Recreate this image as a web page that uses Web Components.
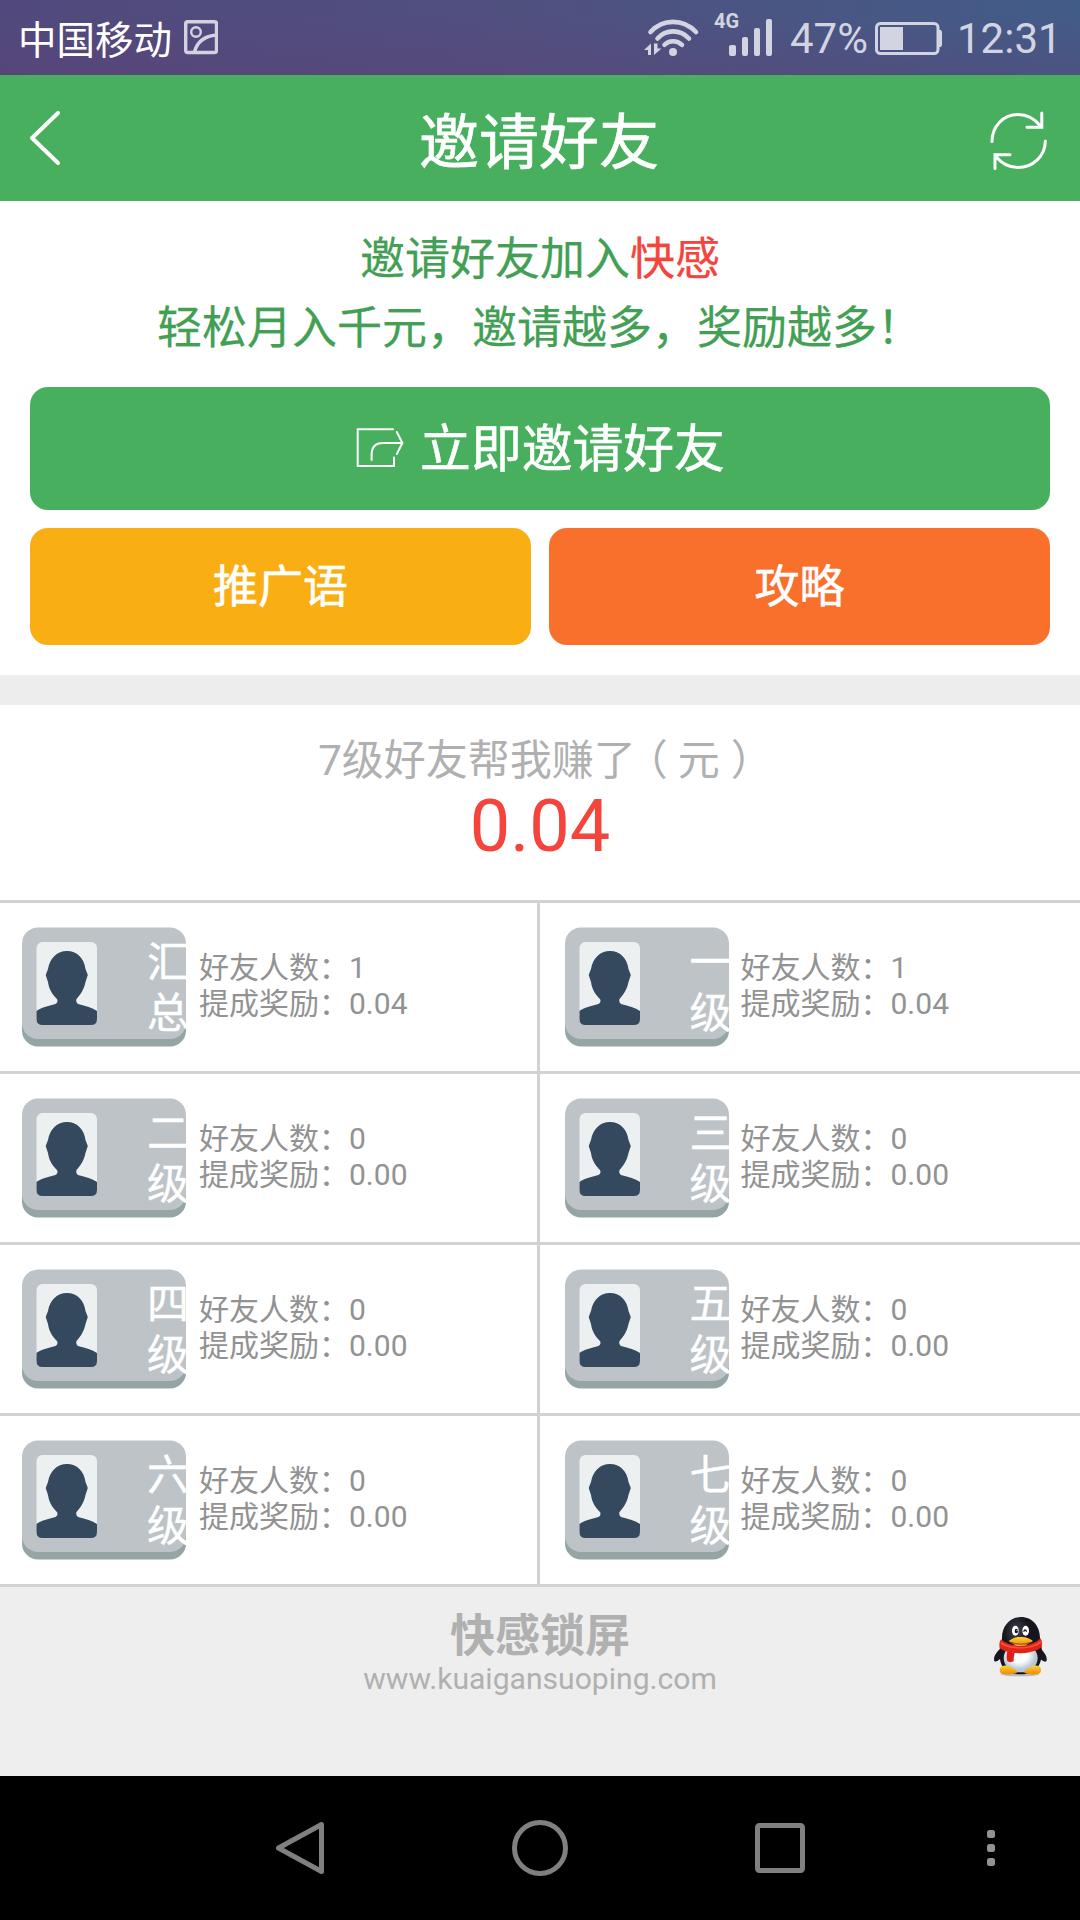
<!DOCTYPE html>
<html lang="zh-CN">
<head>
<meta charset="utf-8">
<title>邀请好友</title>
<style>
html,body{margin:0;padding:0}
body{width:1080px;height:1920px;overflow:hidden;background:#eee;font-family:Roboto,"Noto Sans CJK SC",sans-serif}
</style>
</head>
<body>
<invite-app></invite-app>
<script>
const define = (name, html, init) => {
  const t = document.createElement('template');
  t.innerHTML = html;
  customElements.define(name, class extends HTMLElement {
    constructor() {
      super();
      this.attachShadow({ mode: 'open' }).append(t.content.cloneNode(true));
    }
    connectedCallback() { if (init) init(this, this.shadowRoot); }
  });
};

define('status-bar', `
<style>
:host{display:flex;align-items:flex-start;height:75px;box-sizing:border-box;color:#d2d5e1;
background:linear-gradient(0deg,rgba(100,60,115,.3),rgba(80,70,125,0) 80%),linear-gradient(90deg,#51497d,#50507f 48%,#425c88)}
svg{display:block;flex:none}
.carrier{margin-left:18px;width:154px;font:38.5px/75px "Noto Sans CJK SC",sans-serif;color:#fff;white-space:nowrap}
.pic{margin-left:12px}
.wifi{margin-left:422px}
.net{margin-left:14px;margin-top:8px;width:26px;font:bold 20px/26px Roboto,sans-serif}
.bars{margin-left:-13px}
.pct,.time{font:42px/78px Roboto,sans-serif;white-space:nowrap}
.pct{margin-left:16px;width:80px}
.batt{margin-left:5px}
.time{margin-left:14px}
</style>
<span class="carrier">中国移动</span>
<svg class="pic" width="34" height="75" viewBox="184 0 34 75" fill="none" stroke="#d5d2e0"><rect x="185.7" y="21.7" width="30.8" height="30.8" rx="2" stroke-width="3.4"/><circle cx="196" cy="32" r="4.8" stroke-width="2.4"/><path d="M194.5 52C197 42 205 36 216.500 35" stroke-width="3.4"/></svg>
<svg class="wifi" width="60" height="75" viewBox="640 0 60 75" fill="none" stroke="currentColor" stroke-width="4.6" stroke-linecap="round"><path d="M650.500 32C663 18.500 683 18.500 696 32M657.500 38.500C666 29 680 29 689 38.500M664.500 44.800C669 40 677 40 682 44.800"/><circle cx="673" cy="52" r="4" fill="currentColor" stroke="none"/><path d="M644 50L651 43.500V55H648V50ZM654 55V43.500H657.500V48.500H661.500Z" fill="currentColor" stroke="none"/></svg>
<span class="net">4G</span>
<svg class="bars" width="47" height="75" viewBox="727 0 47 75" fill="currentColor"><rect x="729" y="45" width="7" height="11" rx="2"/><rect x="742" y="37" width="6" height="19" rx="2"/><rect x="754" y="28" width="6" height="28" rx="2"/><rect x="766" y="19" width="6" height="37" rx="2"/></svg>
<span class="pct">47%</span>
<svg class="batt" width="68" height="75" viewBox="875 0 68 75"><rect x="876.500" y="23.500" width="61.500" height="30" rx="4" fill="none" stroke="currentColor" stroke-width="3"/><path d="M880 27H903V50H880ZM939 30H941L942 32V45L941 47H939Z" fill="currentColor"/></svg>
<span class="time">12:31</span>`);

define('title-bar', `
<style>
:host{display:flex;align-items:center;justify-content:space-between;height:126px;background:#48af5f;color:#fff}
svg{display:block}
h1{margin:0 0 0 -2px;font:400 60px/126px "Noto Sans CJK SC",sans-serif;-webkit-text-stroke:.7px #fff}
</style>
<svg width="90" height="126" viewBox="0 75 90 126" fill="none" stroke="#fff" stroke-width="4" stroke-linecap="round" stroke-linejoin="round"><path d="M58 113L32 138L58 163"/></svg>
<h1><slot></slot></h1>
<svg width="90" height="126" viewBox="990 75 90 126" fill="none" stroke="#fff" stroke-width="3" stroke-linecap="round"><path d="M992 141.500C992 126 1003.500 114.500 1018 114.500C1027 114.500 1035 119 1041 126.500M1041.800 113V127.300H1027M1045.300 141C1045.300 156 1033 167.500 1018 167.500C1009 167.500 1001 163 995.500 156M1010 154.700H995V168.500"/></svg>`);

define('action-button', `
<style>
:host{display:flex;align-items:center;justify-content:center;flex:1;box-sizing:border-box;height:var(--h,117px);padding-bottom:6px;border-radius:18px;background:var(--bg);color:#fff;font:400 var(--fs,45px)/1 "Noto Sans CJK SC",sans-serif;-webkit-text-stroke:.6px #fff}
</style><slot name="icon"></slot><slot></slot>`);

define('invite-panel', `
<style>
:host{display:flex;flex-direction:column;height:474px;background:#fff;box-sizing:border-box;padding:20px 30px 0}
p{margin:0;width:1020px;text-align:center;font:45px/69px "Noto Sans CJK SC",sans-serif;color:#429f54;-webkit-text-stroke:.25px}
p.second{text-align:left;text-indent:127px}
em{font-style:normal;color:#f4443c}
.row{display:flex;gap:18px;margin-top:18px}
.main{margin-top:28px}
svg{display:block;margin:3px 15px 0 0}
</style>
<p>邀请好友加入<em>快感</em></p>
<p class="second">轻松月入千元，邀请越多，奖励越多！</p>
<div class="row main"><action-button style="--bg:#48af5f;--h:123px;--fs:50.800px"><svg slot="icon" width="50" height="42" viewBox="356 427 50 42" fill="none" stroke="#fff" stroke-width="2" stroke-linecap="round"><path d="M394 430.300H358.700V467H395V458.500M397.800 433L403.400 444L397.800 455M402 444H384Q372.600 444 372.600 456V461"/></svg>立即邀请好友</action-button></div>
<div class="row"><action-button style="--bg:#f9af14">推广语</action-button><action-button style="--bg:#f8702c">攻略</action-button></div>`);

define('earnings-panel', `
<style>
:host{display:flex;flex-direction:column;align-items:center;height:195px;background:#fff}
.label{margin-top:35px;font:42px/42px Roboto,"Noto Sans CJK SC",sans-serif;color:#b0b0b0;white-space:nowrap}
.l,.r{display:inline-block;width:21px;font-feature-settings:"halt" 1}
.l,.r{margin:0 10px 0 11px}
.sum{font:72px/80px Roboto,sans-serif;color:#f4443c;margin-top:5px}
</style>
<div class="label">7级好友帮我赚了<span class="l">（</span>元<span class="r">）</span></div>
<div class="sum"><slot></slot></div>`);

define('level-badge', `
<style>
:host{display:grid;width:164px;height:120px;flex:none}
svg,.t{grid-area:1/1}
.t{margin:6px 0 0 125px;width:43px;font:42px/51px "Noto Sans CJK SC",sans-serif;color:#fff;word-break:break-all;-webkit-text-stroke:.4px #fff}
</style>
<svg width="164" height="120" viewBox="0 0 164 120"><rect y="20" width="164" height="99.500" rx="16" fill="#95a5a5"/><rect y=".5" width="164" height="111.500" rx="16" fill="#bdc3c7"/><rect x="14.500" y="15" width="60.500" height="83" rx="6" fill="#ecf0f1"/><path d="M45 24C55 24 62 31 63.500 42L65.800 48L63.500 55C62 63 58 68 54.500 72Q53.500 75 56 77C64 79 70 80.500 75 84V92Q75 98 69 98H20.500Q14.500 98 14.500 92V84C19 80.500 26 79 33.500 77Q36.500 75 35 72C31 68 27 63 26 55L23.700 48L26 42C28 31 35 24 45 24Z" fill="#34495e"/></svg>
<div class="t"><slot></slot></div>`);

define('level-cell', `
<style>
:host{display:flex;height:171px;box-sizing:border-box;border-bottom:3px solid #d2d2d2;background:#fff;padding:24px 0 0 22px}
:host(:nth-of-type(odd)){border-right:3px solid #d2d2d2}
:host(:nth-of-type(even)){padding-left:24.500px}
.info{margin:23px 0 0 13px;font:30px/36px Roboto,"Noto Sans CJK SC",sans-serif;color:#929292;white-space:nowrap}
:host(:nth-of-type(even)) .info{margin-left:12px}
.info div{height:36px}
</style>
<level-badge></level-badge>
<div class="info"><div class="n"></div><div class="m"></div></div>`,
(el, root) => {
  root.querySelector('level-badge').textContent = el.getAttribute('name');
  root.querySelector('.n').textContent = '好友人数：' + el.getAttribute('count');
  root.querySelector('.m').textContent = '提成奖励：' + el.getAttribute('reward');
});

define('level-grid', `
<style>:host{display:grid;grid-template-columns:540px 540px;border-top:3px solid #d2d2d2}</style>
<level-cell name="汇总" count="1" reward="0.04"></level-cell>
<level-cell name="一级" count="1" reward="0.04"></level-cell>
<level-cell name="二级" count="0" reward="0.00"></level-cell>
<level-cell name="三级" count="0" reward="0.00"></level-cell>
<level-cell name="四级" count="0" reward="0.00"></level-cell>
<level-cell name="五级" count="0" reward="0.00"></level-cell>
<level-cell name="六级" count="0" reward="0.00"></level-cell>
<level-cell name="七级" count="0" reward="0.00"></level-cell>`);

define('page-footer', `
<style>
:host{display:grid;grid-template-columns:120px 1fr 120px;height:189px;background:#eee;color:#b0b0b0;text-align:center}
.name{margin-top:19px;font:bold 45px/54px "Noto Sans CJK SC",sans-serif}
.url{font:30.100px/36px Roboto,sans-serif;margin-top:1px}
svg{display:block;margin-top:3px}
</style>
<span></span>
<div><div class="name">快感锁屏</div><div class="url">www.kuaigansuoping.com</div></div>
<svg width="120" height="110" viewBox="0 0 360 330">
<defs><radialGradient id="b" cx=".45" cy=".4"><stop offset=".5" stop-color="#fff"/><stop offset="1" stop-color="#b8c7d6"/></radialGradient><linearGradient id="o" x2="0" y2="1"><stop stop-color="#ffd13a"/><stop offset="1" stop-color="#f08a00"/></linearGradient><radialGradient id="k" cx=".4" cy=".25"><stop stop-color="#43434f"/><stop offset=".6" stop-color="#15151d"/></radialGradient></defs>
<ellipse cx="180" cy="252" rx="58" ry="7" fill="#999" opacity=".6"/>
<path d="M123 174C108 187 99 202 103 213Q108 218 120 207L132 194ZM240 174C254 187 264 203 259 214Q253 218 241 207L230 194Z" fill="#171821"/>
<path d="M183 81C217 81 240 108 240 145C248 174 248 207 236 227C225 248 205 253 181 253C154 253 136 246 125 225C115 201 118 172 126 149C124 108 150 81 183 81Z" fill="url(#k)"/>
<ellipse cx="182" cy="204" rx="51" ry="43" fill="url(#b)"/>
<path d="M119 240C118 228 135 224 148 228C160 235 169 241 173 246C166 255 130 255 122 249Q119 246 119 240ZM243 240C244 228 229 224 216 228C203 235 195 241 191 246C198 255 232 255 240 249Q243 246 243 240Z" fill="url(#o)"/>
<path d="M123 148C150 174 214 174 241 145Q249 155 244 172C214 195 148 196 119 175Q116 157 123 148Z" fill="#e02418"/>
<path d="M124 155C152 177 214 178 242 152L243 159C215 180 149 181 122 162Z" fill="#f6533c"/>
<path d="M142 184L164 188Q160 204 161 214Q151 219 142 214Q138 203 142 184Z" fill="#dc2016"/>
<ellipse cx="166" cy="122" rx="10" ry="15" fill="#fff"/><ellipse cx="197" cy="122" rx="10" ry="15" fill="#fff"/><ellipse cx="169" cy="123" rx="5" ry="7" fill="#151515"/><circle cx="171" cy="121" r="1.800" fill="#fff"/><path d="M191 125Q195 115 200 125" fill="none" stroke="#151515" stroke-width="4"/>
<path d="M146 153C158 144 171 140 183 141C197 140 211 147 219 153C206 162 194 166 182 167C168 166 156 161 146 153Z" fill="url(#o)"/><path d="M153 157Q182 168 211 157" fill="none" stroke="#9c4d00" stroke-width="3"/>
</svg>`);

define('nav-bar', `
<style>:host{display:flex;align-items:center;height:144px;background:#000;padding-left:270px;box-sizing:border-box}svg{display:block;flex:none}.c,.s{margin-left:180px}.d{margin-left:170.500px}</style>
<svg width="60" height="60" viewBox="270 1818 60 60" fill="none" stroke="#808080" stroke-width="5" stroke-linejoin="round"><path d="M278.500 1848L321.500 1824.500V1871.500Z"/></svg>
<svg class="c" width="60" height="60" viewBox="510 1818 60 60" fill="none" stroke="#808080" stroke-width="5"><circle cx="540" cy="1848" r="25.500"/></svg>
<svg class="s" width="60" height="60" viewBox="750 1818 60 60" fill="none" stroke="#808080" stroke-width="5"><rect x="757.500" y="1825.500" width="45" height="45" rx="2"/></svg>
<svg class="d" width="20" height="60" viewBox="0 0 20 60" fill="#929292"><rect x="6" y="12" width="8" height="8" rx="2.500"/><rect x="6" y="26" width="8" height="8" rx="2.500"/><rect x="6" y="40" width="8" height="8" rx="2.500"/></svg>`);

define('invite-app', `
<style>:host{display:flex;flex-direction:column;width:1080px;height:1920px;background:#ededed}earnings-panel{margin-top:30px}</style>
<status-bar></status-bar>
<title-bar>邀请好友</title-bar>
<invite-panel></invite-panel>
<earnings-panel>0.04</earnings-panel>
<level-grid></level-grid>
<page-footer></page-footer>
<nav-bar></nav-bar>`);
</script>
</body>
</html>
